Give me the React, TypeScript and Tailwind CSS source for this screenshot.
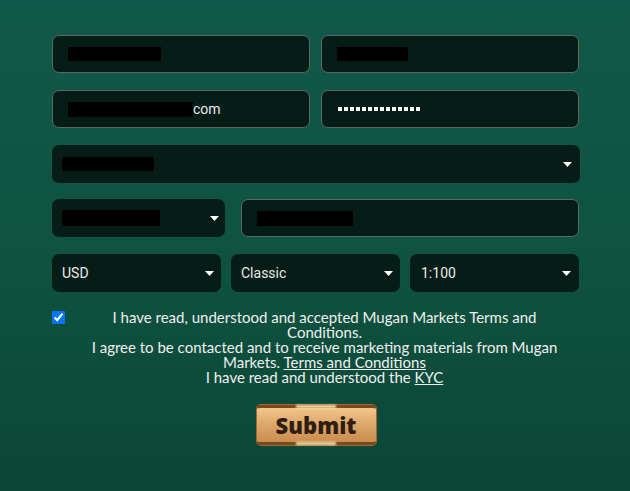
import { ReactNode } from 'react';

const field = "h-[38px] rounded-[7px] bg-[#051c17] flex items-center";

function Redact({ w, h = 14 }: { w: number; h?: number }) {
   return <span className="block bg-black" style={{ width: w, height: h }} />;
}

function Arrow() {
   return (
      <svg width="9" height="5" viewBox="0 0 9 5" className="shrink-0">
         <polygon points="0,0 9,0 4.5,5" fill="#ffffff" />
      </svg>
   );
}

function TextInput({ children, className = "" }: { children: ReactNode; className?: string }) {
   return (
      <div className={`${field} border border-[#5e6663] pl-[15px] ${className}`}>
         {children}
      </div>
   );
}

function Select({ children, className = "", arrowPad = "pr-[8px]" }: { children: ReactNode; className?: string; arrowPad?: string }) {
   return (
      <div className={`${field} justify-between pl-[10px] ${arrowPad} ${className}`}>
         <div className="flex items-center">{children}</div>
         <Arrow />
      </div>
   );
}

export default function App() {
   return (
      <div className="min-h-[491px] w-full bg-gradient-to-b from-[#11594a] via-[#0f5340] to-[#0b4636] pt-[35px] pb-10 font-['Roboto',sans-serif] text-[14px] text-[#eaeaea]">
         <div className="w-[528px] ml-[52px]">
            {/* name */}
            <div className="grid grid-cols-2 gap-[11px] mb-[17px] pr-[1px]">
               <TextInput><Redact w={93} /></TextInput>
               <TextInput><Redact w={71} /></TextInput>
            </div>

            {/* email / password */}
            <div className="grid grid-cols-2 gap-[11px] mb-[17px] pr-[1px]">
               <TextInput>
                  <Redact w={125} h={15} />
                  <span className="leading-none">com</span>
               </TextInput>
               <TextInput className="pl-[16px]">
                  <div className="flex gap-[2px]">
                     {Array.from({ length: 14 }).map((_, i) => (
                        <span key={i} className="block w-[4px] h-[4px] bg-white" />
                     ))}
                  </div>
               </TextInput>
            </div>

            {/* country */}
            <Select className="mb-[16px]" arrowPad="pr-[8px]"><Redact w={92} /></Select>

            {/* phone */}
            <div className="flex gap-[16px] mb-[17px] pr-[1px]">
               <Select className="w-[173px]" arrowPad="pr-[6px]"><Redact w={98} h={16} /></Select>
               <TextInput className="flex-1"><Redact w={96} h={15} /></TextInput>
            </div>

            {/* account */}
            <div className="grid grid-cols-3 gap-[10px] mb-[18px] pr-[1px]">
               <Select arrowPad="pr-[7px]"><span>USD</span></Select>
               <Select arrowPad="pr-[7px]"><span>Classic</span></Select>
               <Select arrowPad="pr-[8px]"><span className="ml-[1px]">1:100</span></Select>
            </div>

            {/* terms */}
            <div className="flex items-start">
               <input type="checkbox" checked readOnly className="m-0 mt-[1px] w-[13px] h-[13px] shrink-0" />
               <div className="flex-1 ml-[4px] text-center font-['Lato',sans-serif] text-[15px] leading-[15px] text-[#f0f0f0]">
                  <div>I have read, understood and accepted Mugan Markets Terms and</div>
                  <div>Conditions.</div>
                  <div>I agree to be contacted and to receive marketing materials from Mugan</div>
                  <div>Markets. <span className="underline">Terms and Conditions</span></div>
                  <div>I have read and understood the <span className="underline">KYC</span></div>
               </div>
            </div>

            <div className="flex justify-center mt-[20px]">
               <button className="relative w-[119px] h-[40px] rounded-[4px] border-y-[3px] border-y-[#7a4a1c] bg-gradient-to-b from-[#f3c58a] via-[#dca66a] to-[#c98d4f] shadow-[0_0_0_1px_#a06a34] font-['Open_Sans',sans-serif] font-extrabold text-[22px] leading-none text-[#2e1d10]">
                  <span className="absolute left-1/2 -top-[3px] -translate-x-1/2 w-[40px] h-[3px] bg-[#ffe7b0] blur-[1px]" />
                  <span className="absolute left-1/2 -bottom-[3px] -translate-x-1/2 w-[40px] h-[3px] bg-[#ffe7b0] blur-[1px]" />
                  Submit
               </button>
            </div>
         </div>
      </div>
   );
}
